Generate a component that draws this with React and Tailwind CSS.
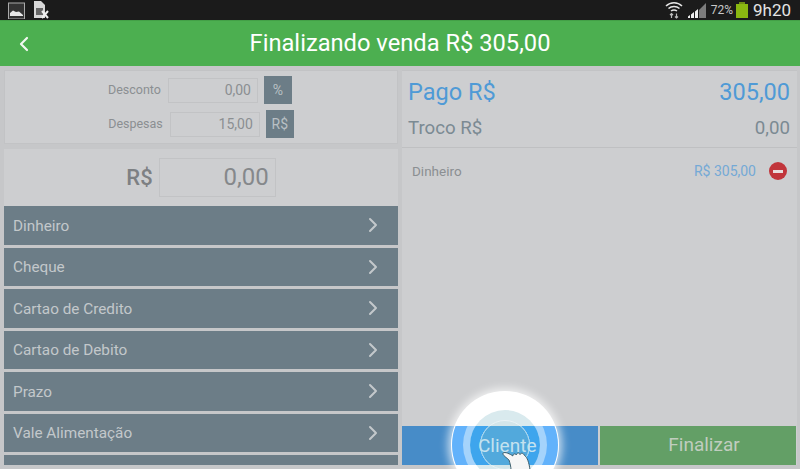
import { ChevronLeft, ChevronRight } from "lucide-react";

const methods = ["Dinheiro", "Cheque", "Cartao de Credito", "Cartao de Debito", "Prazo", "Vale Alimentação"];

function StatusBar() {
  return (
    <div className="h-[20px] bg-[#1b1b1b] flex items-center justify-between pl-[8px] pr-[9px] shrink-0">
      <div className="flex items-center gap-[8px]">
        {/* gallery */}
        <svg width="17" height="17" viewBox="0 0 17 17">
          <rect x="0.5" y="1" width="16" height="16" fill="#333" stroke="#aaa" strokeWidth="1" />
          <path d="M2 14V11L5 8.500L8 10L11 9.500L15 13V14Z" fill="#e8e8e8" />
        </svg>
        {/* sim card */}
        <svg width="16" height="18" viewBox="0 0 16 18">
          <path d="M1 0H8L12 4V17H1Z" fill="#d8d8d8" />
          <rect x="3" y="7" width="7" height="7" fill="#666" />
          <path d="M9 10L15 17M15 10L9 17" stroke="#f0f0f0" strokeWidth="2" />
        </svg>
      </div>
      <div className="flex items-center">
        {/* wifi */}
        <svg width="18" height="18" viewBox="0 0 18 18" fill="none" className="mr-[5px]">
          <path d="M1 5C5.500 0.500 12.500 0.500 17 5" stroke="#e6e6e6" strokeWidth="1.500" />
          <path d="M3.500 7.500C6.500 4.800 11.500 4.800 14.500 7.500" stroke="#e6e6e6" strokeWidth="1.500" />
          <path d="M6 10C7.800 8.700 10.200 8.700 12 10" stroke="#e6e6e6" strokeWidth="1.500" />
          <path d="M6.500 12.500V17M5 14L6.500 12.500L8 14M11.500 12.500V17M10 15.500L11.500 17L13 15.500" stroke="#bdbdbd" strokeWidth="1.200" />
        </svg>
        {/* signal */}
        <svg width="19" height="17" viewBox="0 0 19 17" className="mr-[4px]">
          <path d="M18 1V16H11V8Z" fill="#7c7c7c" />
          <path d="M0 16V14.500L2 13V16ZM3 16V12.500L6 10V16ZM7 16V9.500L10 7V16Z" fill="#efefef" />
        </svg>
        <span className="text-[12px] text-[#c8c8c8] mr-[3px] leading-none">72%</span>
        {/* battery */}
        <div className="w-[12px] h-[16px] mr-[5px] flex flex-col items-center">
          <div className="w-[6px] h-[2px] bg-[#6f8f14]" />
          <div className="w-[12px] flex-1 bg-[#8ab811]" />
        </div>
        <span className="text-[17px] text-[#e4e4e4] leading-none">9h20</span>
      </div>
    </div>
  );
}

function SmallField({ label, value, unit, shift }) {
  return (
    <div className={`flex items-center justify-center h-[28px] ${shift}`}>
      <span className="text-[12.500px] text-[#8b8f92] mr-[7px]">{label}</span>
      <div className="w-[90px] h-[25px] border border-[#c2c3c5] text-right text-[14px] leading-[23px] pr-[6px] text-[#8b8f92]">
        {value}
      </div>
      <div className="w-[28px] h-[28px] ml-[6px] bg-[#6c7d87] text-[#b9c0c4] text-[14px] leading-[28px] text-center">
        {unit}
      </div>
    </div>
  );
}

function Ripple() {
  return (
    <div className="absolute left-[451px] top-[391px] w-[108px] h-[108px] pointer-events-none">
      <div className="absolute inset-0 rounded-full bg-white shadow-[0_0_9px_3px_rgba(255,255,255,0.7)]" />
      <div className="absolute inset-[1px] rounded-full bg-[#62b2fb] [clip-path:inset(34px_0_33px_0)]" />
      <div className="absolute inset-[12px] rounded-full bg-[#a5d3fb] [clip-path:inset(23px_0_22px_0)]" />
      <div className="absolute inset-[19px] rounded-full bg-[#d9eaee]" />
      <div className="absolute inset-[19px] rounded-full bg-[#3ea5ed] [clip-path:inset(16px_0_15px_0)]" />
      <div className="absolute inset-[29px] rounded-full bg-[#d3e6ea] border border-[#eaf4f6]" />
      <div className="absolute inset-[29px] rounded-full bg-[#52a9dc] border border-[#a8d6ee] [clip-path:inset(6px_0_5px_0)]" />
    </div>
  );
}

export default function App() {
  return (
    <div className="relative w-[800px] h-[469px] overflow-hidden bg-[#c6c7c9] flex flex-col font-['Roboto',sans-serif]">
      <StatusBar />

      <div className="h-[46px] bg-[#4caf50] relative flex items-center justify-center shrink-0 border-t border-[#43a047]">
        <ChevronLeft size={24} strokeWidth={2.200} className="absolute left-[12px] text-[#f2f8f2]" />
        <span className="text-[23.700px] text-white">Finalizando venda R$ 305,00</span>
      </div>

      <div className="flex-1 flex pl-[4px] pr-[3px] pt-[4px] pb-[4px] gap-[4px] min-h-0">
        {/* coluna esquerda */}
        <div className="w-[394px] flex flex-col gap-[5px] min-h-0">
          <div className="h-[74px] border border-[#c2c3c5] bg-[#cdced0] flex flex-col pt-[5px] gap-[6px]">
            <SmallField label="Desconto" value="0,00" unit="%" shift="-translate-x-[1px]" />
            <SmallField label="Despesas" value="15,00" unit="R$" />
          </div>

          <div className="flex-1 flex flex-col min-h-0 overflow-hidden">
            <div className="h-[57px] bg-[#cdced0] flex items-center justify-center shrink-0">
              <span className="text-[22px] font-medium text-[#7d8083] mr-[6px]">R$</span>
              <div className="w-[117px] h-[39px] border border-[#c2c3c5] text-right text-[24px] leading-[37px] pr-[6px] text-[#85888b]">
                0,00
              </div>
            </div>
            {methods.map((m) => (
              <div
                key={m}
                className="h-[38.500px] mb-[3px] shrink-0 bg-[#6c7d87] flex items-center justify-between pl-[9px] pr-[13px] text-[15.300px] text-[#c3c8cb]"
              >
                <span className="pt-[2px]">{m}</span>
                <ChevronRight size={24} strokeWidth={2} className="text-[#c3c8cb]" />
              </div>
            ))}
            <div className="flex-1 bg-[#6c7d87]" />
          </div>
        </div>

        {/* coluna direita */}
        <div className="flex-1 flex flex-col border-t border-[#c2c3c5] bg-[#cdced0]">
          <div className="flex justify-between items-center pl-[6px] pr-[7px] h-[43px] text-[23.500px] text-[#4f9ad6]">
            <span>Pago R$</span>
            <span>305,00</span>
          </div>
          <div className="flex justify-between items-center pl-[6px] pr-[7px] h-[28px] text-[18.700px] text-[#7b8a93]">
            <span>Troco R$</span>
            <span>0,00</span>
          </div>
          <div className="h-[6px] border-b border-[#bfc0c2]" />
          <div className="flex items-center justify-between h-[46px] pl-[10px] pr-[10px]">
            <span className="text-[13.500px] text-[#8b8f92]">Dinheiro</span>
            <div className="flex items-center gap-[13px]">
              <span className="text-[14px] text-[#74a9d6]">R$ 305,00</span>
              <div className="w-[18px] h-[18px] rounded-full bg-[#c1353b] flex items-center justify-center">
                <div className="w-[10px] h-[3px] bg-[#e8dcdc]" />
              </div>
            </div>
          </div>
          <div className="flex-1" />
          <div className="grid grid-cols-2 gap-[2px] h-[39px] mr-[1px]">
            <div className="bg-[#478cc8]" />
            <div className="bg-[#639f66] flex items-center justify-center pl-[12px] text-[19px] text-[#c0cdbf]">Finalizar</div>
          </div>
        </div>
      </div>

      <Ripple />

      {/* texto e mao por cima do ripple */}
      <span className="absolute left-[478px] top-[435px] text-[19px] leading-[21px] text-[#c4e2ef]">Cliente</span>
      <svg width="32" height="20" viewBox="0 0 32 20" className="absolute left-[501px] top-[450px]">
        <path
          d="M2 3C4 1.500 9 4 12 6C11.500 4 14 3 15.500 5C15.500 3 18 2 19 4.500C20 2.500 22.500 3 23.500 5.500C26 7 28 12 29 20H10C10 17 9 13 8 10C6 8 1 5 2 3Z"
          fill="#f6f6f6"
          stroke="#40606e"
          strokeWidth="1"
        />
      </svg>
    </div>
  );
}
